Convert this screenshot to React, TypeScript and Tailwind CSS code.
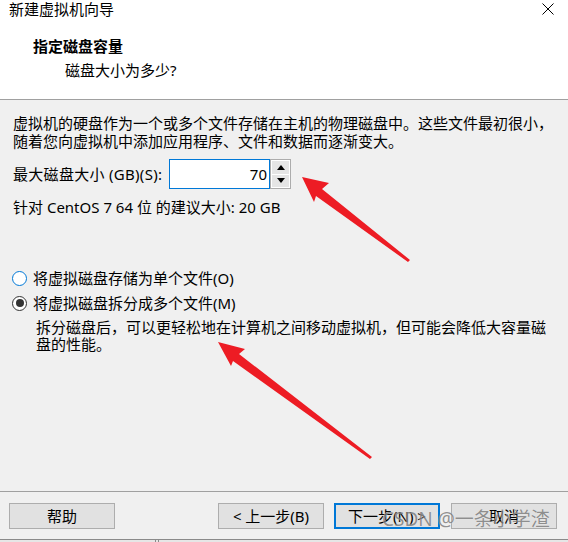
import React from "react";

const font = "font-['Noto_Sans','Noto_Sans_CJK_SC',sans-serif]";

const Btn: React.FC<{ label: string; primary?: boolean }> = ({ label, primary }) => (
   <div
      className={`h-[26px] w-[106px] flex items-center justify-center bg-[#e1e1e1] text-[15px] text-black ${
         primary ? "border-2 border-[#0078d7]" : "border border-[#adadad]"
      }`}
   >
      {label}
   </div>
);

const Radio: React.FC<{ checked?: boolean; label: string }> = ({ checked, label }) => (
   <div className="flex items-center h-[18px] pl-[12px]">
      <span
         className={`w-[15px] h-[15px] rounded-full bg-white flex items-center justify-center border ${
            checked ? "border-[#333333]" : "border-[#0078d7]"
         }`}
      >
         {checked && <span className="w-[8px] h-[8px] rounded-full bg-[#333333]" />}
      </span>
      <span className="ml-[6px] leading-[18px]">{label}</span>
   </div>
);

// red annotation arrows painted over the dialog
const Arrows = () => (
   <svg className="absolute inset-0 pointer-events-none" width="568" height="542" viewBox="0 0 568 542">
      <polygon
         fill="#ed1c24"
         points="302,177 329,183 322,189 410,260 408,262 316,196 314,202"
      />
      <polygon
         fill="#ed1c24"
         points="218,342 245,349 239,354 372,457 370,459 233,361 231,366"
      />
   </svg>
);

export default function App() {
   return (
      <div className={`relative w-[568px] h-[542px] flex flex-col bg-[#f0f0f0] text-black text-[15px] ${font}`}>
         {/* header */}
         <div className="h-[100px] bg-white border-b border-[#a0a0a0] relative">
            <div className="h-[18px] leading-[18px] pl-[9px]">新建虚拟机向导</div>
            <svg className="absolute left-[542px] top-[3px]" width="12" height="12" viewBox="0 0 12 12">
               <path d="M0.5 0.5 L11.5 11.5 M11.5 0.5 L0.5 11.5" stroke="#000" strokeWidth="1" />
            </svg>
            <div className="mt-[19px] h-[18px] leading-[18px] pl-[33px] font-bold">指定磁盘容量</div>
            <div className="mt-[6px] h-[18px] leading-[18px] pl-[65px]">磁盘大小为多少?</div>
         </div>

         {/* body */}
         <div className="flex-1 flex flex-col pl-[13px]">
            <p className="mt-[14px] leading-[18px] whitespace-nowrap">
               虚拟机的硬盘作为一个或多个文件存储在主机的物理磁盘中。这些文件最初很小，
               <br />
               随着您向虚拟机中添加应用程序、文件和数据而逐渐变大。
            </p>
            <div className="mt-[9px] flex items-center h-[30px]">
               <span className="leading-[18px] w-[156px] tracking-[0.3px]">最大磁盘大小 (GB)(S):</span>
               <div className="w-[101px] h-[30px] bg-white border border-[#0078d7] flex items-center justify-end pr-[2px]">
                  70
               </div>
               <div className="w-[21px] h-[30px] border border-[#acacac] flex flex-col p-[1px] gap-[1px] bg-white">
                  <div className="flex-1 bg-[#e5e5e5] flex items-center justify-center">
                     <svg width="8" height="5" viewBox="0 0 8 5">
                        <polygon points="4,0 8,5 0,5" fill="#000" />
                     </svg>
                  </div>
                  <div className="flex-1 bg-[#e5e5e5] flex items-center justify-center">
                     <svg width="8" height="5" viewBox="0 0 8 5">
                        <polygon points="0,0 8,0 4,5" fill="#000" />
                     </svg>
                  </div>
               </div>
            </div>
            <div className="mt-[9px] leading-[18px]">针对 CentOS 7 64 位 的建议大小: 20 GB</div>
         </div>

         <div className="absolute left-0 top-[269px] flex flex-col gap-[7px]">
            <Radio label="将虚拟磁盘存储为单个文件(O)" />
            <Radio checked label="将虚拟磁盘拆分成多个文件(M)" />
            <p className="pl-[36px] leading-[17px] whitespace-nowrap">
               拆分磁盘后，可以更轻松地在计算机之间移动虚拟机，但可能会降低大容量磁
               <br />
               盘的性能。
            </p>
         </div>

         {/* footer */}
         <div className="h-[48px] border-t border-[#a0a0a0] flex items-start pt-[11px] pl-[9px] pr-[11px]">
            <Btn label="帮助" />
            <div className="flex-1" />
            <Btn label="< 上一步(B)" />
            <div className="w-[10px]" />
            <Btn label="下一步(N) >" primary />
            <div className="w-[11px]" />
            <Btn label="取消" />
         </div>
         <div className="h-[3px] border-t border-[#8a8a8a] bg-[#e6e6e6] flex">
            <div className="ml-[155px] w-[1px] bg-[#8a8a8a]" />
            <div className="ml-[2px] w-[1px] bg-[#8a8a8a]" />
         </div>

         <Arrows />

         <div className="absolute left-[382px] top-[508px] text-[19px] leading-[22px] text-[#7a7a7a] opacity-80 pointer-events-none whitespace-nowrap [text-shadow:0_0_1px_#ffffff]">
            CSDN @一条小学渣
         </div>
      </div>
   );
}
